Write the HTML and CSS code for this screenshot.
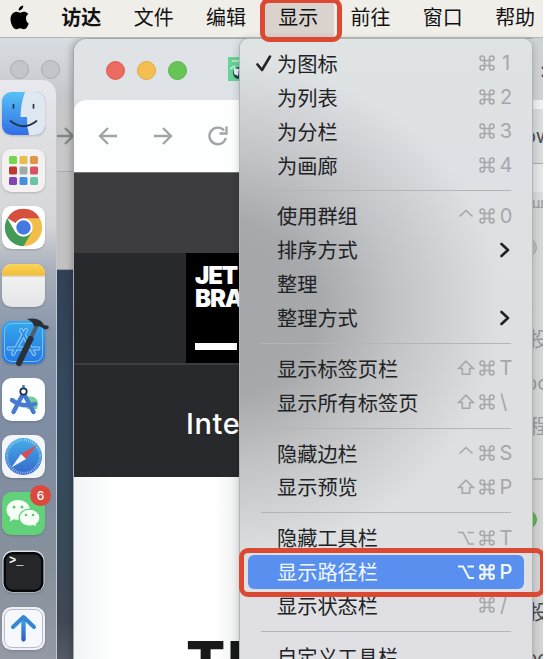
FILE: index.html
```
<!DOCTYPE html>
<html lang="zh-CN">
<head>
<meta charset="utf-8">
<title>访达</title>
<link rel="stylesheet" href="styles.css">
</head>
<body>
<div class="desktop">

  <section class="back-window">
    <div class="back-tabs"><i class="dot"></i><i class="dot"></i></div>
    <div class="back-toolbar">
      <svg width="20" height="20" viewBox="0 0 20 20"><path d="M0 10H17M9 2l8 8-8 8" fill="none" stroke="#858688" stroke-width="2.4"/></svg>
    </div>
    <div class="back-page"></div>
  </section>

  <section class="browser">
    <div class="tabs">
      <i class="dot red"></i><i class="dot yellow"></i><i class="dot green"></i>
      <svg class="favicon" width="22" height="24" viewBox="0 0 22 24"><rect width="22" height="24" fill="#66d394"/><path d="M4 4h10M2 12l5-3" stroke="#c5f2d8" stroke-width="1.5"/><circle cx="11" cy="16" r="6" fill="#24395c"/><path d="M6 11l5 1-1 7-4-2z" fill="#e7f1f4"/></svg>
    </div>
    <div class="toolbar">
      <svg width="22" height="20" viewBox="0 0 22 20"><path d="M20 10H3M11 2l-8 8 8 8"/></svg>
      <svg width="22" height="20" viewBox="0 0 22 20"><path d="M2 10h17M11 2l8 8-8 8"/></svg>
      <svg width="22" height="20" viewBox="0 0 22 20"><path d="M18.800 12A8.300 8.300 0 1 1 17 4.500M19.500 0.500V7.500H12.500"/></svg>
    </div>
    <div class="page">
      <div class="banner"></div>
      <div class="site-head">
        <div class="logo"><span>JET<br>BRA</span><i></i></div>
      </div>
      <div class="subnav">Inte</div>
      <div class="hero">Th</div>
    </div>
  </section>

  <aside class="side">
    <div class="side-top">:</div>
    <div class="side-gap"></div>
    <div class="side-address">ow</div>
    <div class="side-field"></div>
    <div class="side-label">ur</div>
    <div class="side-body">
      <i class="knob"></i>
      <span class="s1">投</span><span class="s2">po</span><span class="s3">程</span>
    </div>
    <div class="side-low">
      <i class="knob green"></i>
      <span class="s4">投</span><span class="s5">po</span>
    </div>
  </aside>

  <aside class="dock">
    <svg viewBox="0 0 43 43"><defs>
      <linearGradient id="fb" x2="0" y2="1"><stop stop-color="#55c1f5"/><stop offset="1" stop-color="#326ee6"/></linearGradient>
      <linearGradient id="xb" x2="0" y2="1"><stop stop-color="#35a6ee"/><stop offset="1" stop-color="#2678e2"/></linearGradient>
      <linearGradient id="yb" x2="0" y2="1"><stop stop-color="#fbd457"/><stop offset="1" stop-color="#f2bd37"/></linearGradient>
      <linearGradient id="wb" x2="0" y2="1"><stop stop-color="#f6f6f6"/><stop offset="1" stop-color="#e5e4e6"/></linearGradient>
      <linearGradient id="sb" x2="0" y2="1"><stop stop-color="#45aee8"/><stop offset="1" stop-color="#3567ca"/></linearGradient>
      <linearGradient id="ub" x2="0" y2="1"><stop stop-color="#3cabe5"/><stop offset="1" stop-color="#3057c8"/></linearGradient>
      <clipPath id="tile"><rect width="43" height="43" rx="9.500"/></clipPath></defs>
      <g clip-path="url(#tile)"><rect width="43" height="43" fill="url(#fb)"/><path d="M23 0C20 8 18.500 17 18.500 25H25Q24.500 34 27 43H43V0z" fill="#dfe7f1"/></g>
      <path d="M11.500 12.500v3.500M31.500 12.500v3.500M8.500 29q13 10.500 26 0" fill="none" stroke="#22324a" stroke-width="1.700" stroke-linecap="round"/></svg>
    <svg viewBox="0 0 43 43"><rect width="43" height="43" rx="9.500" fill="#f3f2f1"/>
      <g><rect x="7" y="7" width="8" height="8" rx="1.500" fill="#77d552"/><rect x="17.500" y="7" width="8" height="8" rx="1.500" fill="#e8bd4c"/><rect x="28" y="7" width="8" height="8" rx="1.500" fill="#df9648"/><rect x="7" y="17.500" width="8" height="8" rx="1.500" fill="#bd3735"/><rect x="17.500" y="17.500" width="8" height="8" rx="1.500" fill="#a2aaa8"/><rect x="28" y="17.500" width="8" height="8" rx="1.500" fill="#d95262"/><rect x="7" y="28" width="8" height="8" rx="1.500" fill="#8144b4"/><rect x="17.500" y="28" width="8" height="8" rx="1.500" fill="#458edb"/><rect x="28" y="28" width="8" height="8" rx="1.500" fill="#69c5a5"/></g></svg>
    <svg viewBox="0 0 43 43"><rect width="43" height="43" rx="9.500" fill="#fff"/>
      <path d="M21.500 21.500L5.300 12.200A18.700 18.700 0 0 1 37.700 12.200z" fill="#d65040"/><path d="M21.500 21.500V12.200H37.700A18.700 18.700 0 0 1 21.500 40.200z" fill="#f2bd48"/><path d="M21.500 21.500L29.600 26.200 21.500 40.200A18.700 18.700 0 0 1 5.300 12.200L13.400 26.200z" fill="#429a55"/><circle cx="21.500" cy="21.500" r="9.200" fill="#fff"/><circle cx="21.500" cy="21.500" r="7.200" fill="#4679df"/></svg>
    <svg viewBox="0 0 43 43"><g clip-path="url(#tile)"><rect width="43" height="43" fill="url(#wb)"/><rect width="43" height="11.500" fill="url(#yb)"/><path d="M0 12h43" stroke="#cbb57e" stroke-width=".8"/></g></svg>
    <svg viewBox="0 0 43 43"><rect width="43" height="43" rx="9.500" fill="url(#xb)"/><rect x="2.500" y="2.500" width="38" height="38" rx="7.500" fill="none" stroke="#7ac1f2"/>
      <path d="M19 9l13 24M24 9L11 33M6.500 27.500h30" fill="none" stroke="#91cff8" stroke-width="4" stroke-linecap="round"/><path d="M19 9l13 24M24 9L11 33M6.500 27.500h30" fill="none" stroke="#308ee7" stroke-width="2" stroke-linecap="round"/>
      <path d="M35 4L28.500 18" stroke="#555b63" stroke-width="4"/><path d="M28.500 18L17 42" stroke="#2b3037" stroke-width="6" stroke-linecap="round"/><path d="M25-2q8-1.500 14 2l3 4 4.500 1v2.500l-3.500 1-5-3-6-.5q-1-4.500-7-7z" fill="#292f34"/></svg>
    <svg viewBox="0 0 43 43"><rect width="43" height="43" rx="9.500" fill="#fdfeff"/><path d="M25 18.500h4a7 7 0 0 1 7 7.500l-1 5H25z" fill="#74cf94"/><path d="M21.500 15L11.500 34M21.500 15L31.500 34M10 22q10 8 23 4" fill="none" stroke="#477bd0" stroke-width="4.400" stroke-linecap="round"/><path d="M21.500 7v6" stroke="#477bd0" stroke-width="2.500"/><circle cx="21.500" cy="13.500" r="3.200" fill="#fff" stroke="#17364c" stroke-width="1.800"/></svg>
    <svg viewBox="0 0 43 43"><rect width="43" height="43" rx="9.500" fill="#f3f4f7"/><circle cx="21.500" cy="21.500" r="18.500" fill="url(#sb)"/><circle cx="21.500" cy="21.500" r="16.500" fill="none" stroke="#b9daf6" stroke-width="2.500" stroke-dasharray=".7 1.460"/><path d="M35 10L19 19l5 5z" fill="#dc4c50"/><path d="M9.500 32.500L19 19l5 5z" fill="#f1f4f6"/></svg>
    <div class="app"><svg viewBox="0 0 43 43"><rect width="43" height="43" rx="9.500" fill="#61d17a"/><path d="M16 8C9 8 4.500 12.500 4.500 18c0 3 1.500 5.500 4 7.500l-1 4 4.500-2.300q2 .5 4 .5c7 0 12-4.200 12-9.700S23 8 16 8z" fill="#f5fff6"/><path d="M27.500 17.200c-6 0-10.300 3.800-10.300 8.500s4.300 8.500 10.300 8.500q2 0 3.800-.6l3.800 2-.8-3.300c2.300-1.600 3.700-4 3.700-6.600 0-4.700-4.500-8.500-10.500-8.500z" fill="#f5fff6" stroke="#61d17a" stroke-width="1.300"/><g fill="#5fc576"><circle cx="12" cy="15" r="1.500"/><circle cx="20" cy="15" r="1.500"/><circle cx="24" cy="23" r="1.300"/><circle cx="31" cy="23" r="1.300"/></g></svg><b class="badge">6</b></div>
    <div class="app"><svg viewBox="0 0 43 43"><rect x=".5" y=".5" width="42" height="42" rx="10" fill="#dfe3e8"/><rect x="1.500" y="2" width="40" height="40" rx="9" fill="#070809"/><rect x="4" y="4.500" width="35" height="35" rx="6.500" fill="#242628"/></svg><code class="prompt">&gt;_</code></div>
    <svg viewBox="0 0 43 43"><rect width="43" height="43" rx="9.500" fill="#eef1f6"/><rect x="2.500" y="2.500" width="38" height="38" rx="7.500" fill="#f7f8fd" stroke="#a7afba" stroke-width=".8"/><path d="M19.300 11h4.400v22q-2.200 3.500-4.400 0z" fill="url(#ub)"/><path d="M11 20L21.500 10 32 20" fill="none" stroke="#3387d3" stroke-width="4" stroke-linecap="round" stroke-linejoin="round"/></svg>
  </aside>

  <header class="menubar">
    <svg class="apple" width="21" height="25" viewBox="0 0 21 25"><path d="M14.200.5c.2 2.600-1.800 5-4.500 5C9.400 3 11.700.7 14.200.5zM17 13c0-2.500 2-3.700 2.300-4-1.300-1.900-3.300-2.300-4-2.300-1.700-.2-3.300 1-4.200 1s-2.200-1-3.600-1C5.500 6.800 3.600 8 2.600 9.800c-2.200 3.800-.6 9.400 1.500 12.400 1 1.500 2.300 2 3.500 2s2-.9 3.600-.9 2.200.9 3.600.9c1.500 0 2.400-1 3.300-2.300 1-1.300 1.500-2.800 1.700-3.300-.5-.2-2.800-1.500-2.800-5.600z"/></svg>
    <b>访达</b><span>文件</span><span>编辑</span><span class="active">显示</span><span>前往</span><span>窗口</span><span>帮助</span>
  </header>

  <svg width="0" height="0" class="defs"><defs>
    <symbol id="cmd" viewBox="0 0 16 16"><path d="M5.500 5.500h5v5h-5zM5.500 5.500H3.200a2.250 2.250 0 1 1 2.300-2.300zM10.500 5.500V3.200a2.250 2.250 0 1 1 2.300 2.300zM10.500 10.500h2.300a2.250 2.250 0 1 1-2.300 2.300zM5.500 10.500v2.300a2.250 2.250 0 1 1-2.300-2.300z"/></symbol>
    <symbol id="shift" viewBox="0 0 18 16"><path d="M9 1.200l7.300 7.300h-3.600v5.800H5.300V8.500H1.700z"/></symbol>
    <symbol id="ctrl" viewBox="0 0 18 16"><path d="M2.500 8.500L9 2.500l6.500 6"/></symbol>
    <symbol id="opt" viewBox="0 0 18 16"><path d="M1 2.500h5l6 11.500h5M10.500 2.500H17"/></symbol>
  </defs></svg>

  <nav class="menu">
    <div class="row"><svg class="check" width="16" height="17" viewBox="0 0 16 17"><path d="M1.500 9.500l4.500 5.500L14 1.500" fill="none" stroke="#222426" stroke-width="2.600" stroke-linecap="round" stroke-linejoin="round"/></svg>为图标<kbd><svg class="c"><use href="#cmd"/></svg><i>1</i></kbd></div>
    <div class="row">为列表<kbd><svg class="c"><use href="#cmd"/></svg><i>2</i></kbd></div>
    <div class="row">为分栏<kbd><svg class="c"><use href="#cmd"/></svg><i>3</i></kbd></div>
    <div class="row">为画廊<kbd><svg class="c"><use href="#cmd"/></svg><i>4</i></kbd></div>
    <hr>
    <div class="row">使用群组<kbd><svg class="m"><use href="#ctrl"/></svg><svg class="c"><use href="#cmd"/></svg><i>0</i></kbd></div>
    <div class="row">排序方式<svg class="chev" width="10" height="16" viewBox="0 0 10 16"><path d="M1.500 2L8 8l-6.500 6"/></svg></div>
    <div class="row">整理</div>
    <div class="row">整理方式<svg class="chev" width="10" height="16" viewBox="0 0 10 16"><path d="M1.500 2L8 8l-6.500 6"/></svg></div>
    <hr>
    <div class="row">显示标签页栏<kbd><svg class="m"><use href="#shift"/></svg><svg class="c"><use href="#cmd"/></svg><i>T</i></kbd></div>
    <div class="row">显示所有标签页<kbd><svg class="m"><use href="#shift"/></svg><svg class="c"><use href="#cmd"/></svg><i class="thin">\</i></kbd></div>
    <hr>
    <div class="row">隐藏边栏<kbd><svg class="m"><use href="#ctrl"/></svg><svg class="c"><use href="#cmd"/></svg><i>S</i></kbd></div>
    <div class="row">显示预览<kbd><svg class="m"><use href="#shift"/></svg><svg class="c"><use href="#cmd"/></svg><i>P</i></kbd></div>
    <hr>
    <div class="row">隐藏工具栏<kbd><svg class="m"><use href="#opt"/></svg><svg class="c"><use href="#cmd"/></svg><i>T</i></kbd></div>
    <div class="row selected">显示路径栏<kbd><svg class="m"><use href="#opt"/></svg><svg class="c"><use href="#cmd"/></svg><i>P</i></kbd></div>
    <div class="row">显示状态栏<kbd><svg class="c"><use href="#cmd"/></svg><i class="thin">/</i></kbd></div>
    <hr>
    <div class="row">自定义工具栏</div>
  </nav>

  <div class="mark mark-title"></div>
  <div class="mark mark-row"></div>
</div>
</body>
</html>
```
FILE: styles.css
```
* { box-sizing: border-box; }
html, body { margin: 0; height: 659px; overflow: hidden; background: #fff; }
body { font-family: Inter, "Noto Sans CJK SC", sans-serif; }
svg { display: block; flex: none; }
i { font-style: normal; }
.defs { position: absolute; }

.desktop {
  position: relative;
  width: 543px;
  height: 659px;
  overflow: hidden;
  background: linear-gradient(#334058 269px, #34495f 400px, #354a58 520px, #424855 620px, #555a66);
}

.menubar {
  position: absolute;
  inset: 0 0 auto;
  height: 38px;
  display: flex;
  align-items: center;
  background: #f0eee9;
  border-bottom: 1px solid #b5b6b6;
  font-size: 20px;
  line-height: 37px;
  color: #111;
  white-space: nowrap;
}
.menubar > span, .menubar > b { width: 72.300px; flex: none; text-align: center; height: 37px; }
.menubar .apple { margin: 0 7px 2px 9px; }
.menubar > b { width: 80.500px; padding-left: 8px; }
.menubar .active { background: #d9d2cd; }

.dot { width: 19px; height: 19px; border-radius: 50%; background: #c3c5ca; border: 1px solid #a9abb0; flex: none; }
.dot.red { background: #ec6a60; border-color: #d95e56; }
.dot.yellow { background: #f4bf50; border-color: #dfaa42; }
.dot.green { background: #65c657; border-color: #58b34c; }

.back-window { position: absolute; left: 0; top: 38px; width: 86px; height: 232px; background: #c7c8ca; border-bottom: 1px solid #95999d; }
.back-tabs { height: 62px; display: flex; gap: 12px; padding: 22px 0 0 10px; background: linear-gradient(#d9dde2, #c5c6cc); }
.back-toolbar { height: 72px; display: flex; align-items: center; justify-content: flex-end; padding-right: 10px; border-bottom: 1px solid #aaabac; background: #c7c7c9; }
.back-page { height: 97px; background: linear-gradient(90deg, #b9b9bb, #c5c5c6); }

.browser {
  position: absolute;
  left: 73px;
  top: 38px;
  width: 470px;
  height: 640px;
  border: 1px solid #a5a8ab;
  border-radius: 14px 0 0 0;
  overflow: hidden;
  background: #dde1e7;
  box-shadow: -2px 0 6px rgba(0, 0, 0, .22);
}
.tabs { height: 61px; display: flex; align-items: center; gap: 12px; padding: 1px 0 0 31.500px; background: linear-gradient(90deg, #dfe3e6, #dce1e7); }
.favicon { margin-left: 29px; margin-top: -2px; }
.toolbar { height: 72px; display: flex; align-items: center; gap: 33px; padding-left: 22.500px; background: #fdfefe; border-radius: 12px 0 0 0; }
.toolbar svg { fill: none; stroke: #a3a4a5; stroke-width: 2.400; }
.page { background: #fff; height: 500px; }
.banner { height: 81px; background: #3d3d3f; border-top: 1px solid #777; }
.site-head { height: 112px; padding-left: 112px; background: #28292c; border-bottom: 2px solid #3c3d40; }
.logo { width: 120px; height: 110px; padding: 12px 9px 13px; background: #000; color: #fff; font: 900 24px/22.500px Inter, sans-serif; letter-spacing: -1.100px; display: flex; flex-direction: column; justify-content: space-between; }
.logo i { width: 42px; height: 7px; background: #fff; }
.subnav { height: 112px; padding-left: 112px; background: #28292c; color: #fff; font: 500 29px/118px Inter, sans-serif; letter-spacing: .6px; }
.hero { height: 182px; padding: 150px 0 0 112px; color: #181818; font: 800 58px/70px Inter, sans-serif; letter-spacing: 2px; background: linear-gradient(90deg, #f2f4f6, #fff 40px, #fff 140px, #eff0f1 166px); }

.side { position: absolute; left: 532px; top: 38px; width: 11px; height: 621px; overflow: hidden; background: #d8dadb; color: #4a4c4f; font-size: 20px; white-space: nowrap; }
.side-top { height: 62px; padding-left: 8px; line-height: 64px; background: #cfd3d6; }
.side-gap { height: 9px; background: #eff1f3; }
.side-address { height: 55px; line-height: 55px; background: #d9dcdf; border-bottom: 1px solid #aaadb0; margin-left: -8px; }
.side-field { height: 28px; background: #e5e6e8; }
.side-label { height: 16px; font-size: 14px; line-height: 22px; overflow: hidden; color: #999; border-bottom: 1px solid #a3a6a6; }
.side-body { position: relative; height: 272px; background: #d5d7d7; border-bottom: 2px solid #b1b4b5; color: #989b9d; }
.side-low { position: relative; height: 179px; background: #d4d4d5; }
.side-body span, .side-low span { position: absolute; left: -3px; line-height: 24px; }
.side .s2, .side .s5 { left: -7px; }
.s1 { top: 120px; } .s2 { top: 163px; } .s3 { top: 207px; }
.s4 { top: 121px; } .s5 { top: 166px; }
.knob { position: absolute; left: -14px; top: 30px; width: 19px; height: 19px; border-radius: 50%; background: #bdc0c1; border: 1px solid #a8abad; }
.knob.green { background: #5eb952; border-color: #55a84b; }

.dock {
  position: absolute;
  left: -2px;
  top: 80px;
  width: 59px;
  height: 600px;
  padding: 12px 0 0 4px;
  display: flex;
  flex-direction: column;
  gap: 14.200px;
  border: 1px solid #c5c9cf;
  border-width: 0 1px 0 0;
  border-radius: 0 14px 0 0;
  background: linear-gradient(#e8e9ee, #dedfe1 60px, #d5d6d8 145px, #a7afba 190px, #8593a8 260px, #7f8da3 360px, #87919c 490px, #989ba8);
}
.dock svg { width: 43px; height: 43px; overflow: visible; filter: drop-shadow(0 1px 1px rgba(0, 0, 0, .18)); }
.app { position: relative; width: 43px; height: 43px; flex: none; }
.badge { position: absolute; left: 28px; top: -7px; width: 21px; height: 21px; border-radius: 50%; background: #dc493c; color: #fff; font: 500 12px/21px Inter, sans-serif; text-align: center; }
.prompt { position: absolute; left: 7px; top: 5px; color: #fff; font: bold 12px/13px "Liberation Mono", monospace; }

.menu {
  position: absolute;
  left: 239px;
  top: 38px;
  width: 294px;
  height: 640px;
  padding: 8px 8px 0;
  border: 1px solid #b2b5b7;
  border-width: 1px 1px 0;
  border-radius: 9px;
  box-shadow: 0 2px 8px rgba(0, 0, 0, .2);
  background:
    radial-gradient(ellipse 280px 250px at -20px 270px, rgba(140, 143, 145, .72), rgba(140, 143, 145, .68) 35%, rgba(152, 155, 157, .42) 62%, rgba(200, 200, 203, 0)),
    linear-gradient(#dfe3e3, #dfe0e5 120px, #dedfe1 300px, #dedfe1 450px, #e0e0e4);
  color: #202224;
  font-size: 20.200px;
}
.row { position: relative; display: flex; align-items: center; justify-content: space-between; height: 33.900px; padding: 0 11px 1px 29px; border-radius: 6px; white-space: nowrap; }
.check { position: absolute; left: 8px; top: 8px; }
.chev { margin-right: 3px; fill: none; stroke: #202224; stroke-width: 2.600; stroke-linecap: round; stroke-linejoin: round; }
kbd { display: flex; align-items: center; color: #a5a7aa; font: 20px/30px Inter, sans-serif; }
kbd svg { fill: none; stroke: currentColor; stroke-width: 1.600; }
kbd .m { width: 18px; height: 16px; margin-right: 4px; }
kbd .c { width: 16px; height: 16px; margin-right: 4px; }
kbd i { width: 14px; text-align: center; }
kbd .thin { text-align: left; padding-left: 1px; }
.selected { background: #5990f0; color: #f1f8ff; }
.selected kbd { color: #f1f8ff; font-weight: 500; }
.selected kbd svg { stroke-width: 2; }
hr { height: 1px; margin: 7.900px 13px 8px 13px; border: 0; background: #b3b5b7; }

.mark { position: absolute; border: 5px solid #dc4932; border-radius: 9px; }
.mark-title { left: 260px; top: -2px; width: 82px; height: 44px; }
.mark-row { left: 239px; top: 548px; width: 306px; height: 49px; }
```
